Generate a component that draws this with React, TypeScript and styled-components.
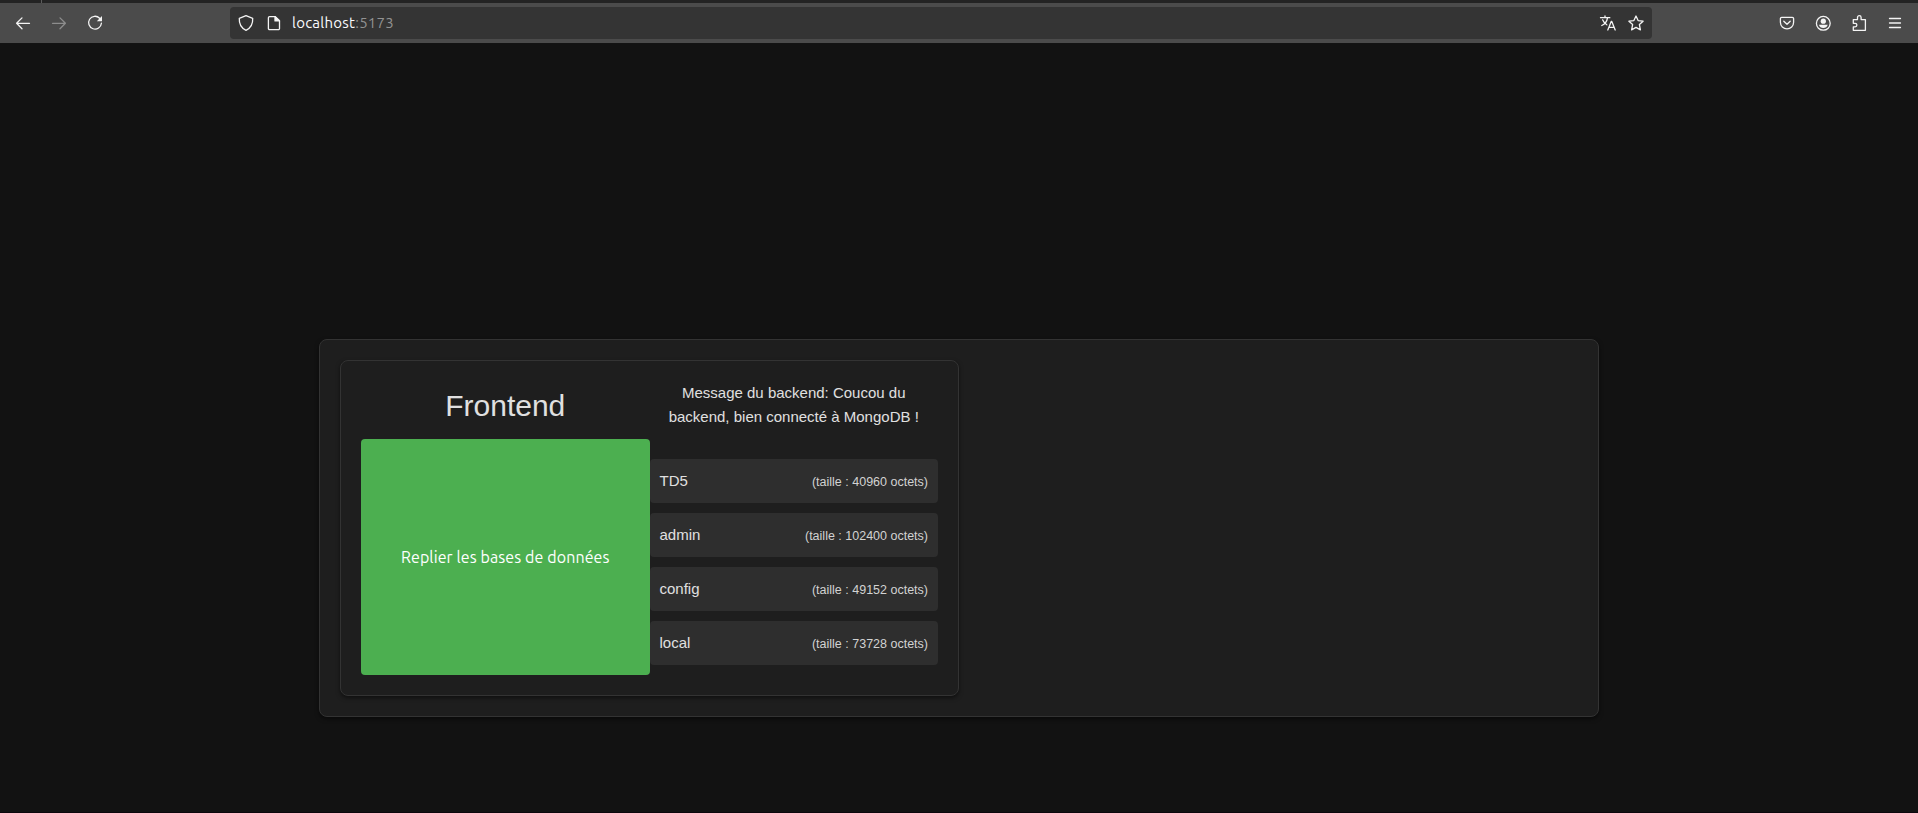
import React from "react";
import styled, { createGlobalStyle } from "styled-components";

const GlobalStyle = createGlobalStyle`
  *, *::before, *::after { box-sizing: border-box; }
  html, body { margin: 0; padding: 0; background: #121212; }
  body { font-family: "Liberation Sans", Arial, sans-serif; font-size: 15px; line-height: 1.6; color: #e0e0e0; overflow: hidden; }
`;

const Window = styled.div`
  display: flex;
  flex-direction: column;
  height: 813px;
  border-bottom: 1px solid #0b060c;
`;

const TabStrip = styled.div`
  height: 3px;
  flex: none;
  padding-left: 41px;
  background: #232323;
`;

const TabSeparator = styled.div`
  width: 1px;
  height: 3px;
  background: #5c5c5c;
`;

const Toolbar = styled.div`
  display: flex;
  align-items: center;
  flex: none;
  height: 41px;
  padding: 0 13px;
  background: #4b4b4b;
  border-bottom: 1px solid #131313;
`;

const NavButtons = styled.div`
  display: flex;
  gap: 16px;
  width: 217px;
`;

const IconBox = styled.svg<{ $dim?: boolean }>`
  display: block;
  flex: none;
  width: 20px;
  height: 20px;
  color: ${(p) => (p.$dim ? "#8d8d8d" : "#f4f4f4")};
  fill: none;
  stroke: currentColor;
  stroke-width: 1.3;
  stroke-linecap: round;
  stroke-linejoin: round;
`;

const UrlBar = styled.div`
  display: flex;
  align-items: center;
  width: 1422px;
  height: 32px;
  padding: 0 6px;
  border-radius: 4px;
  background: #343434;
`;

const UrlIcons = styled.div`
  display: flex;
  gap: 8px;
`;

const Url = styled.div`
  flex: 1;
  padding-left: 8px;
  font: 15px/20px Ubuntu, "Noto Sans", sans-serif;
  letter-spacing: 0.24px;
  color: #fbfbfe;
`;

const Port = styled.span`
  color: #929292;
`;

const Actions = styled.div`
  display: flex;
  gap: 16px;
  margin-left: auto;
`;

const Page = styled.main`
  display: flex;
  flex: 1;
  justify-content: center;
  align-items: flex-start;
  padding-top: 295px;
`;

const Card = styled.section`
  padding: 20px;
  border: 1px solid #333;
  border-radius: 8px;
  background: #1e1e1e;
  box-shadow: 0 2px 4px rgba(0, 0, 0, 0.5);
`;

const Root = styled(Card)`
  display: grid;
  grid-template-columns: 1fr 1fr;
  width: 1280px;
`;

const Panel = styled(Card)`
  display: grid;
  grid-template-columns: 1fr 1fr;
`;

const Title = styled.h1`
  margin: 0 0 8px;
  font-size: 30px;
  font-weight: 400;
  line-height: 50px;
  text-align: center;
`;

const Message = styled.p`
  margin: 0 0 10px;
  text-align: center;
`;

const FoldButton = styled.button`
  padding: 10px 20px;
  border: 0;
  border-radius: 4px;
  background: #4caf50;
  color: #fff;
  font: 16px/20px Ubuntu, "Noto Sans", sans-serif;
  letter-spacing: 0.1px;
`;

const DatabaseList = styled.ul`
  margin: 20px 0 0;
  padding: 0;
  list-style: none;
`;

const DatabaseRow = styled.li`
  display: flex;
  justify-content: space-between;
  align-items: baseline;
  height: 44px;
  margin-bottom: 10px;
  padding: 10px;
  border-radius: 4px;
  background: #2e2e2e;
`;

const Size = styled.span`
  font-size: 12.5px;
  color: #d2d2d2;
`;

const databases = [
  { name: "TD5", size: 40960 },
  { name: "admin", size: 102400 },
  { name: "config", size: 49152 },
  { name: "local", size: 73728 },
];

const Browser = () => (
  <Toolbar>
    <NavButtons>
      <IconBox viewBox="0 0 20 20"><path d="M16.5 10.3H3.7M9 4.9L3.6 10.3L9 15.7" /></IconBox>
      <IconBox viewBox="0 0 20 20" $dim><path d="M3.5 10.3h12.8M11 4.9l5.4 5.4l-5.4 5.4" /></IconBox>
      <IconBox viewBox="0 0 20 20">
        <path d="M14.6 5.2A6.4 6.4 0 1 0 16.4 10.2" />
        <path d="M17 3v5.2h-5.2z" fill="currentColor" stroke="none" />
      </IconBox>
    </NavButtons>
    <UrlBar>
      <UrlIcons>
        <IconBox viewBox="0 0 20 20"><path d="M10 2.7L16.7 5.3C17 10.5 15 15 10 17.3C5 15 3 10.5 3.3 5.3Z" /></IconBox>
        <IconBox viewBox="0 0 20 20">
          <path d="M5.6 3.6h5.7l4.2 4.2v7.6a1.2 1.2 0 0 1-1.2 1.2H5.6a1.2 1.2 0 0 1-1.2-1.2V4.8a1.2 1.2 0 0 1 1.2-1.2z" />
          <path d="M11 3.6v4.3h4.5z" fill="currentColor" />
        </IconBox>
      </UrlIcons>
      <Url>localhost<Port>:5173</Port></Url>
      <UrlIcons>
        <IconBox viewBox="0 0 20 20">
          <path d="M2.5 4.7h9.3M7 3v1.7M3.8 12.5C7.5 10.8 9 8 9.5 4.8M4.6 6.8c1 2.4 2.3 3.9 4.2 5" />
          <path d="M9.8 17l3.4-8.5h.6L17.2 17M11 14.3h5" />
        </IconBox>
        <IconBox viewBox="0 0 20 20"><path d="M10 3l2.1 4.6l5 .6l-3.7 3.4l1 5.3L10 14.4l-4.4 2.5l1-5.3L2.9 8.2l5-.6z" /></IconBox>
      </UrlIcons>
    </UrlBar>
    <Actions>
      <IconBox viewBox="0 0 20 20">
        <path d="M4.7 4.3h10.6a1.3 1.3 0 0 1 1.3 1.3v3.7a6.6 6.6 0 0 1-13.2 0V5.6a1.3 1.3 0 0 1 1.3-1.3z" />
        <path d="M6.8 8.3L10 11.3l3.2-3" />
      </IconBox>
      <IconBox viewBox="0 0 20 20">
        <circle cx="10.3" cy="10.3" r="6.9" />
        <circle cx="10.3" cy="8.2" r="2.6" fill="currentColor" stroke="none" />
        <path d="M5.9 11.8h8.8a4.6 4.6 0 0 1-8.8 0z" fill="currentColor" stroke="none" />
      </IconBox>
      <IconBox viewBox="0 0 20 20">
        <path d="M4.3 6.6H8.5V4.4a1.8 1.8 0 0 1 3.6 0v2.2h4.3v10.7H4.3v-3.4h1.8a1.8 1.8 0 0 0 0-3.6H4.3z" />
      </IconBox>
      <IconBox viewBox="0 0 20 20"><path d="M4.5 5.5h11M4.5 10h11M4.5 14.5h11" /></IconBox>
    </Actions>
  </Toolbar>
);

export default function App() {
  return (
    <Window>
      <GlobalStyle />
      <TabStrip><TabSeparator /></TabStrip>
      <Browser />
      <Page>
        <Root>
          <Panel>
            <Title>Frontend</Title>
            <Message>Message du backend: Coucou du backend, bien connecté à MongoDB !</Message>
            <FoldButton>Replier les bases de données</FoldButton>
            <DatabaseList>
              {databases.map((db) => (
                <DatabaseRow key={db.name}>
                  {db.name}
                  <Size>(taille : {db.size} octets)</Size>
                </DatabaseRow>
              ))}
            </DatabaseList>
          </Panel>
        </Root>
      </Page>
    </Window>
  );
}
